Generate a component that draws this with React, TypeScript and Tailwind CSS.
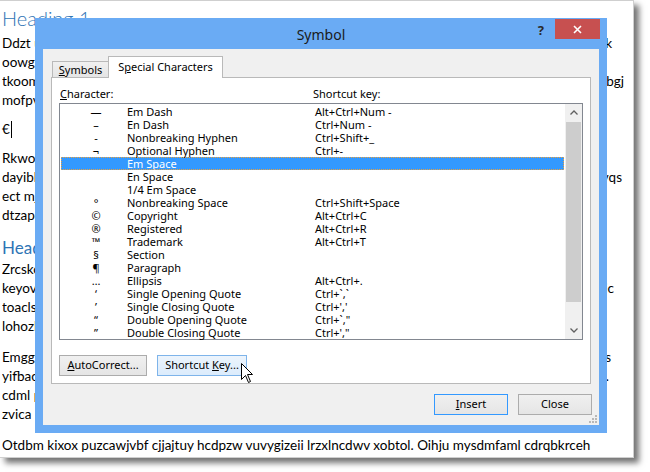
import React from "react";

const Line = ({ l, r, rc }: { l: string; r?: string; rc?: string }) => (
  <div className={`flex h-[19px] leading-[19px] whitespace-nowrap ${rc ?? ""}`}>
    <span className="flex-1 min-w-0 overflow-hidden">{l}</span>
    {r && <span>{r}</span>}
  </div>
);

const rows: [string, string, string][] = [
  ["—", "Em Dash", "Alt+Ctrl+Num -"],
  ["–", "En Dash", "Ctrl+Num -"],
  ["-", "Nonbreaking Hyphen", "Ctrl+Shift+_"],
  ["¬", "Optional Hyphen", "Ctrl+-"],
  ["", "Em Space", ""],
  ["", "En Space", ""],
  ["", "1/4 Em Space", ""],
  ["°", "Nonbreaking Space", "Ctrl+Shift+Space"],
  ["©", "Copyright", "Alt+Ctrl+C"],
  ["®", "Registered", "Alt+Ctrl+R"],
  ["™", "Trademark", "Alt+Ctrl+T"],
  ["§", "Section", ""],
  ["¶", "Paragraph", ""],
  ["…", "Ellipsis", "Alt+Ctrl+."],
  ["‘", "Single Opening Quote", "Ctrl+`,`"],
  ["’", "Single Closing Quote", "Ctrl+','"],
  ["“", "Double Opening Quote", "Ctrl+`,\""],
  ["”", "Double Closing Quote", "Ctrl+',\""],
];

export default function App() {
  return (
    <div className="relative w-[650px] h-[472px] bg-white overflow-hidden">
      {/* Document page */}
      <div className="w-[634px] h-[458px] bg-white border-t border-r border-b border-[#cfcfcf] shadow-[5px_5px_6px_rgba(0,0,0,0.55)] pl-[2px] pt-[5px] font-['Lato',sans-serif] text-[13.5px] text-black flex flex-col">
        <div className="h-[24px] leading-[24px] text-[20px] text-[#2e74b5] font-light">Heading 1</div>
        <div className="mt-[4px]">
          <Line l="Ddzt uvbgre qlmnos tzwpk" r="k" rc="pr-[21px]" />
          <Line l="oowg fjeyw mnbvuc trsa" />
          <Line l="tkoom xaqui vmelsr jihop" r="bgj" rc="pr-[9px]" />
          <Line l="mofpvw gtuzn rehd alkq" />
        </div>
        <div className="mt-[10px] flex h-[19px] leading-[19px] items-center">
          <span>€</span>
          <span className="inline-block w-px h-[17px] bg-black ml-[1px]" />
        </div>
        <div className="mt-[10px]">
          <Line l="Rkwolp yzuq ndvem ahcst" />
          <Line l="dayiblr qowe xtnfu zrmk" r="vqs" rc="pr-[11px]" />
          <Line l="ect mjuvo srae kgbw" />
          <Line l="dtzapq nulwi yreo cfhb" />
        </div>
        <div className="mt-[12px] h-[22px] leading-[22px] text-[17px] text-[#2e74b5]">Heading 2</div>
        <div className="mt-[1px]">
          <Line l="Zrcsko fmtpq ewuyd lan" />
          <Line l="keyovd rmat bxzh iqlw" r="ic" rc="pr-[19px]" />
          <Line l="toaclsv nyge dprk umfi" />
          <Line l="lohozl biqt vecwm aysu" />
        </div>
        <div className="mt-[12px]">
          <Line l="Emggyv tpaur nxkoe bdil" r="s" rc="pr-[22px]" />
          <Line l="yifbacz mwoe qhrsl tnug" r="." rc="pr-[24px]" />
          <Line l="cdml pxhu ortazk weqy" />
          <Line l="zvica pynd ejloum rstb" />
        </div>
        <div className="mt-[12px]">
          <Line l="Otdbm kixox puzcawjvbf cjjajtuy hcdpzw vuvygizeii lrzxlncdwv xobtol. Oihju mysdmfaml cdrqbkrceh" />
        </div>
      </div>

      {/* Symbol dialog */}
      <div className="absolute left-[35px] top-[18px] w-[572px] h-[415px] bg-[#6aabf4] flex flex-col font-['Noto_Sans',sans-serif] text-[11px] text-black">
        {/* Title bar */}
        <div className="h-[31px] grid grid-cols-[1fr_auto_1fr]">
          <div />
          <div className="flex items-center pt-[1px] text-[14px] text-[#1a1a1a]">Symbol</div>
          <div className="flex justify-end items-start pt-[1px] pr-[7px]">
            <div className="mt-[2px] mr-[11px] text-[13px] font-bold text-[#2a2a2a] leading-[18px]">?</div>
            <div className="w-[45px] h-[20px] bg-[#c75050] flex items-center justify-center">
              <svg width="9" height="9" viewBox="0 0 9 9">
                <path d="M1 1L8 8M8 1L1 8" stroke="white" strokeWidth="1.6" />
              </svg>
            </div>
          </div>
        </div>

        {/* Client area */}
        <div className="relative mx-[8px] mb-[8px] flex-1 bg-[#f0f0f0] pt-[7px] px-[8px] flex flex-col">
          {/* Tabs */}
          <div className="flex items-end h-[21px] pl-[1px]">
            <div className="h-[16px] w-[56px] border-t border-l border-[#b9b9b9] bg-gradient-to-b from-[#f0f0f0] to-[#e5e5e5] flex items-center justify-center leading-[14px]">
              <span><span className="underline">S</span>ymbols</span>
            </div>
            <div className="relative z-10 -mb-px h-[22px] w-[115px] border-t border-l border-r border-[#b9b9b9] bg-white flex items-center justify-center pb-[2px] leading-[14px]">
              <span>S<span className="underline">p</span>ecial Characters</span>
            </div>
          </div>

          {/* Tab panel */}
          <div className="border border-[#b9b9b9] bg-white px-[7px] pb-[7px] flex flex-col">
            <div className="flex pt-[9px] mb-[2px] leading-[14px]">
              <div className="w-[254px] pl-[1px]"><span className="underline">C</span>haracter:</div>
              <div>Shortcut key:</div>
            </div>

            {/* List */}
            <div className="h-[237px] border border-[#828790] bg-white flex">
              <div className="flex-1 pt-[1px] px-[1px]">
                {rows.map(([sym, name, key], i) => {
                  const sel = i === 4;
                  return (
                    <div
                      key={i}
                      className={`flex h-[13px] leading-[13px] whitespace-nowrap ${
                        sel ? "bg-[#3399ff] text-white outline-1 outline-dotted outline-[#e8a040] -outline-offset-1" : ""
                      }`}
                    >
                      <div className="w-[66px] pl-[4px] text-center">{sym}</div>
                      <div className="w-[188px]">{name}</div>
                      <div>{key}</div>
                    </div>
                  );
                })}
              </div>
              {/* Scrollbar */}
              <div className="w-[17px] bg-[#f0f0f0] flex flex-col">
                <div className="h-[17px] flex items-center justify-center">
                  <svg width="8" height="5" viewBox="0 0 8 5">
                    <path d="M0.5 4.5L4 1L7.5 4.5" stroke="#606060" strokeWidth="1.3" fill="none" />
                  </svg>
                </div>
                <div className="mt-[1px] mx-[1px] h-[180px] bg-[#cdcdcd]" />
                <div className="flex-1" />
                <div className="h-[17px] flex items-center justify-center">
                  <svg width="8" height="5" viewBox="0 0 8 5">
                    <path d="M0.5 0.5L4 4L7.5 0.5" stroke="#606060" strokeWidth="1.3" fill="none" />
                  </svg>
                </div>
              </div>
            </div>

            {/* Buttons inside panel */}
            <div className="flex gap-[10px] mt-[15px]">
              <div className="w-[88px] h-[21px] border border-[#acacac] bg-gradient-to-b from-[#f0f0f0] to-[#e5e5e5] flex items-center justify-center">
                <span><span className="underline">A</span>utoCorrect...</span>
              </div>
              <div className="w-[90px] h-[21px] border border-[#7eb4ea] bg-gradient-to-b from-[#ecf4fc] to-[#dcecfc] flex items-center justify-center">
                <span>Shortcut <span className="underline">K</span>ey...</span>
              </div>
            </div>
          </div>

          {/* Bottom buttons */}
          <div className="flex justify-end gap-[10px] mt-[10px] -mr-[1px]">
            <div className="w-[74px] h-[21px] border border-[#3399ff] bg-gradient-to-b from-[#f0f0f0] to-[#e5e5e5] flex items-center justify-center">
              <span><span className="underline">I</span>nsert</span>
            </div>
            <div className="w-[74px] h-[21px] border border-[#acacac] bg-gradient-to-b from-[#f0f0f0] to-[#e5e5e5] flex items-center justify-center">
              Close
            </div>
          </div>

          {/* Resize grip */}
          <svg className="absolute right-[1px] bottom-[1px]" width="10" height="10" viewBox="0 0 10 10">
            <rect x="7" y="1" width="2" height="2" fill="#b8b8b8" />
            <rect x="4" y="4" width="2" height="2" fill="#b8b8b8" />
            <rect x="7" y="4" width="2" height="2" fill="#b8b8b8" />
            <rect x="1" y="7" width="2" height="2" fill="#b8b8b8" />
            <rect x="4" y="7" width="2" height="2" fill="#b8b8b8" />
            <rect x="7" y="7" width="2" height="2" fill="#b8b8b8" />
          </svg>
        </div>
      </div>

      {/* Mouse cursor */}
      <svg className="absolute left-[241px] top-[363px]" width="13" height="21" viewBox="0 0 13 21">
        <path d="M0.5 0.5L0.5 16.5L4.5 12.5L7.5 19.5L9.5 18.5L6.5 11.5L11.5 11.5Z" fill="white" stroke="black" strokeWidth="1" strokeLinejoin="miter" />
      </svg>
    </div>
  );
}
